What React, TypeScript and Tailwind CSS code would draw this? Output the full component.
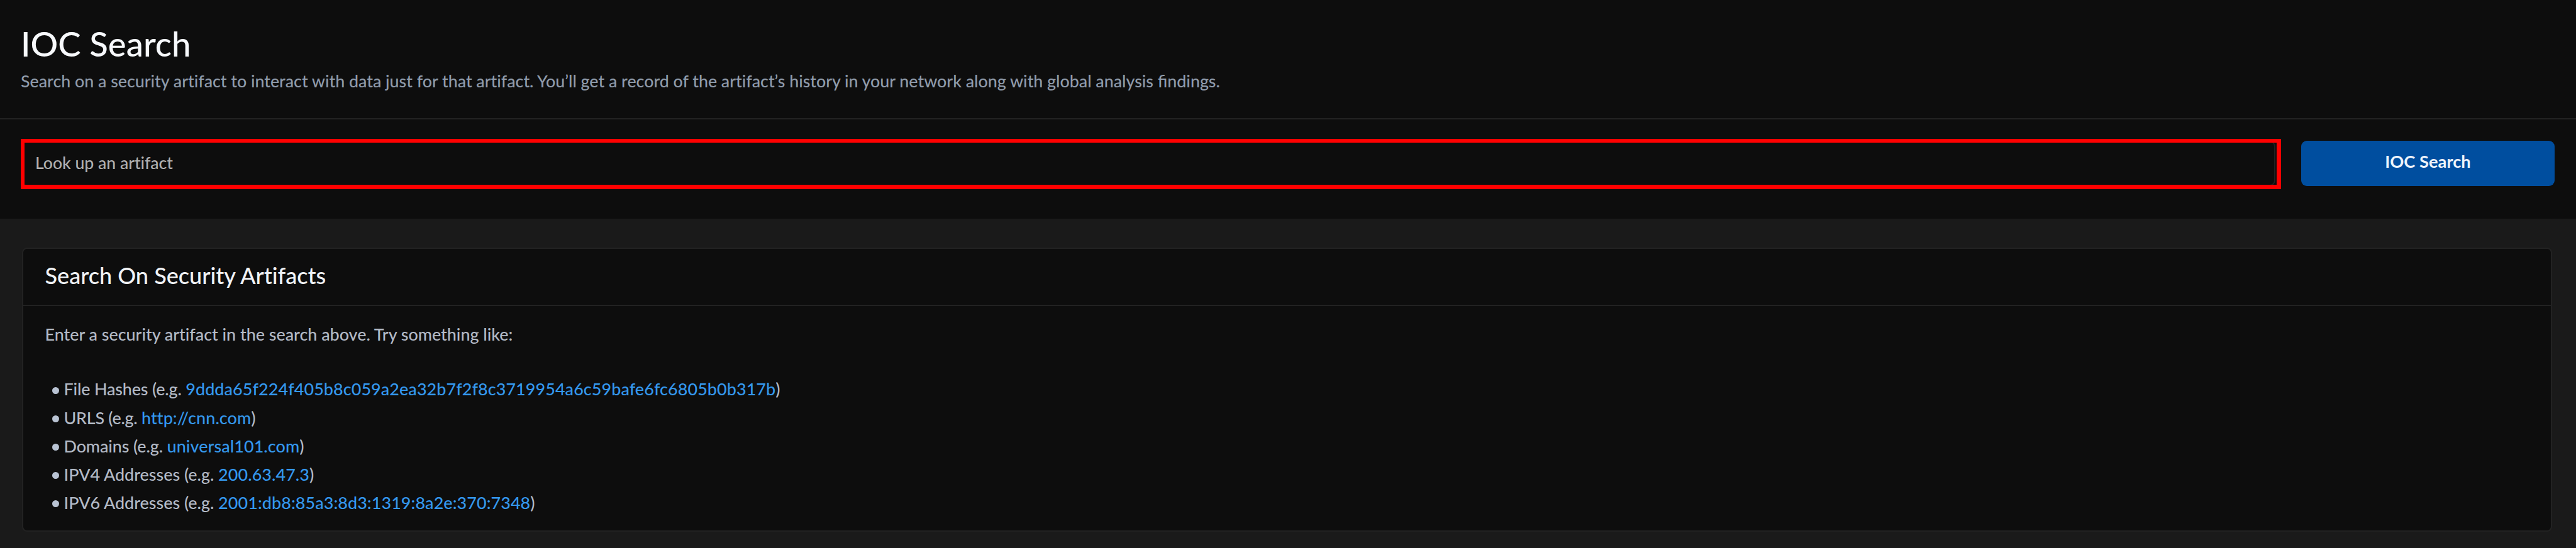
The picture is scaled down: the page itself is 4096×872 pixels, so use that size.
interface Example {
  label: string
  value: string
  tracking?: string
}

const examples: Example[] = [
  {
    label: "File Hashes",
    value: "9ddda65f224f405b8c059a2ea32b7f2f8c3719954a6c59bafe6fc6805b0b317b",
    tracking: "tracking-[-0.15px]",
  },
  { label: "URLS", value: "http://cnn.com", tracking: "tracking-[-0.25px]" },
  { label: "Domains", value: "universal101.com", tracking: "tracking-[-0.1px]" },
  { label: "IPV4 Addresses", value: "200.63.47.3" },
  { label: "IPV6 Addresses", value: "2001:db8:85a3:8d3:1319:8a2e:370:7348" },
]

function PageHeader() {
  return (
    <header className="h-[190px] border-b-2 border-[#222222] bg-[#0d0d0d] pl-[33px] pt-9">
      <h1 className="text-[54.5px] leading-[66px] text-[#f7f9fc]">IOC Search</h1>
      <p className="mt-[11px] text-[26.8px] leading-8 text-[#8f9bab]">
        Search on a security artifact to interact with data just for that artifact. You’ll get a record of the
        artifact’s history in your network along with global analysis{" "}
        <span className="[font-variant-ligatures:normal]">findings.</span>
      </p>
    </header>
  )
}

function SearchBar() {
  return (
    <section className="flex h-[158px] gap-[41px] bg-[#0d0d0d] pl-[33px] pr-[34px] pt-[34px]">
      <div className="relative h-[72px] flex-1">
        <input
          type="text"
          placeholder="Look up an artifact"
          className="h-full w-full rounded-[9px] border-2 border-[#222222] bg-transparent pb-[2px] pl-[21px] text-[26.6px] text-[#b0b0b0] placeholder:text-[#b0b0b0] outline-none"
        />
        {/* Highlight frame */}
        <div className="pointer-events-none absolute -bottom-[5px] -right-[9px] -top-[3px] left-0 border-b-[7px] border-l-[6px] border-r-[7px] border-t-[6px] border-[#ff0000]" />
      </div>
      <button className="h-[72px] w-[403px] rounded-[9px] bg-[#004e9f] pb-[6px] text-[27.3px] font-bold text-[#eef4fb]">
        IOC Search
      </button>
    </section>
  )
}

function ArtifactExamples() {
  return (
    <section className="ml-[35px] mr-[38px] mt-[46px] h-[452px] rounded-[8px] border-2 border-[#222222] bg-[#0d0d0d]">
      <h2 className="flex h-[91px] items-center border-b-2 border-[#222222] pb-[5px] pl-[34.5px] text-[36.1px] text-[#f1f3f6]">
        Search On Security Artifacts
      </h2>
      <div className="pl-[34.5px] pt-[29px] text-[26.9px] text-[#b3bac6]">
        <p className="leading-8">Enter a security artifact in the search above. Try something like:</p>
        <ul className="mt-[49px] pl-[11px]">
          {examples.map((item) => (
            <li key={item.label} className="flex h-[45.2px] items-center">
              <span className="mr-[8px] mt-[3px] h-[11px] w-[11px] rounded-full bg-[#b9c3d3]" />
              <span>
                <span className={item.tracking}>{item.label} (e.g. </span>
                <a className="tracking-[0.1px] text-[#3498ee]">{item.value}</a>)
              </span>
            </li>
          ))}
        </ul>
      </div>
    </section>
  )
}

export default function App() {
  return (
    <main className="flow-root h-[872px] w-[4096px] overflow-hidden bg-[#1a1a1a] font-[Lato,sans-serif] font-medium [font-variant-ligatures:none]">
      <PageHeader />
      <SearchBar />
      <ArtifactExamples />
    </main>
  )
}
